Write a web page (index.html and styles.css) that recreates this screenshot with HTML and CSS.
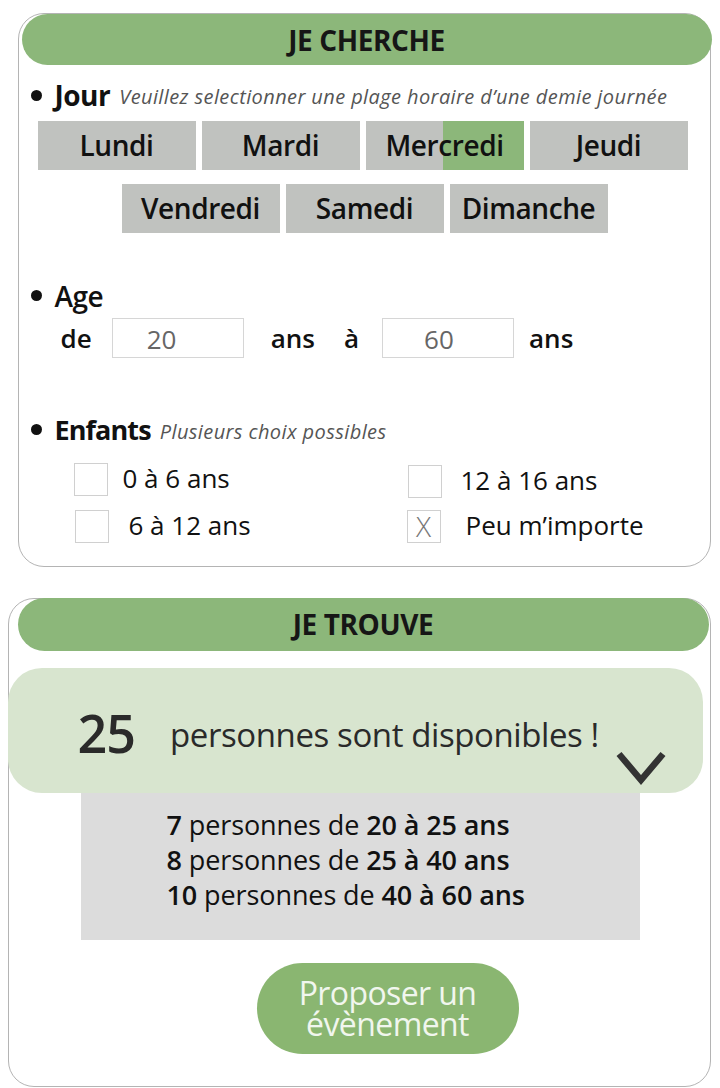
FILE: index.html
```html
<!DOCTYPE html>
<html lang="fr">
<head>
<meta charset="utf-8">
<title>Je cherche / Je trouve</title>
<link rel="stylesheet" href="styles.css">
</head>
<body>
  <section class="card card-search">
    <div class="pill-header">JE CHERCHE</div>

    <div class="section-title st-jour">
      <span class="dot"></span><span class="label">Jour</span>
      <span class="hint">Veuillez selectionner une plage horaire d’une demie journée</span>
    </div>
    <div class="days">
      <div class="day">Lundi</div>
      <div class="day">Mardi</div>
      <div class="day day-half">Mercredi</div>
      <div class="day">Jeudi</div>
      <div class="day">Vendredi</div>
      <div class="day">Samedi</div>
      <div class="day">Dimanche</div>
    </div>

    <div class="section-title st-age">
      <span class="dot"></span><span class="label label-age">Age</span>
    </div>
    <div class="age-row">
      <span class="word">de</span>
      <div class="num-input in-from">20</div>
      <span class="word w-ans1">ans</span>
      <span class="word w-a">à</span>
      <div class="num-input in-to">60</div>
      <span class="word w-ans2">ans</span>
    </div>

    <div class="section-title st-enfants">
      <span class="dot"></span><span class="label label-enfants">Enfants</span>
      <span class="hint">Plusieurs choix possibles</span>
    </div>
    <div class="kids">
      <div class="kid"><span class="box"></span><span>0 à 6 ans</span></div>
      <div class="kid kid-r1"><span class="box"></span><span>12 à 16 ans</span></div>
      <div class="kid kid-l2"><span class="box"></span><span>6 à 12 ans</span></div>
      <div class="kid kid-r2"><span class="box box-checked">X</span><span>Peu m’importe</span></div>
    </div>
  </section>

  <section class="card card-result">
    <div class="pill-header">JE TROUVE</div>
    <div class="result">
      <span class="count">25</span>
      <span class="count-text">personnes sont disponibles !</span>
      <svg class="chevron" width="50" height="36" viewBox="0 0 50 36" aria-hidden="true">
        <path d="M3 4 L25 30 L47 4" fill="none" stroke="#333" stroke-width="6.5"/>
      </svg>
    </div>
    <div class="breakdown">
      <div><b>7</b> personnes de <b>20 à 25 ans</b></div>
      <div><b>8</b> personnes de <b>25 à 40 ans</b></div>
      <div><b>10</b> personnes de <b>40 à 60 ans</b></div>
    </div>
    <div class="btn">Proposer un<br>évènement</div>
  </section>
</body>
</html>
```

FILE: styles.css
```css
body {
  margin: 0;
  font-family: "Open Sans", "Noto Sans", sans-serif;
  color: #111;
  background: #fff;
}

.card {
  box-sizing: border-box;
  border: 1.5px solid #b4b4b4;
  border-radius: 26px;
  background: #fff;
  display: flex;
  flex-direction: column;
}

.card-search {
  margin: 13px 0 0 18px;
  width: 693px;
  height: 554px;
}

.card-result {
  margin: 31px 0 0 8px;
  width: 703px;
  height: 489px;
  position: relative;
}

.pill-header {
  background: #8cb77a;
  border-radius: 27px;
  display: flex;
  align-items: center;
  justify-content: center;
  font-weight: 700;
  font-size: 28px;
  letter-spacing: -0.4px;
  color: #161616;
}

.card-search .pill-header {
  height: 51px;
  margin: 0 -1.5px 0 2.5px;
}

.card-result .pill-header {
  height: 53px;
  margin: -1.5px 1.5px 0 8.5px;
}

/* section titles */
.section-title {
  display: flex;
  align-items: center;
  height: 30px;
  padding-left: 11.5px;
}

.dot {
  width: 11px;
  height: 11px;
  border-radius: 50%;
  background: #111;
  margin-right: 13px;
  flex: none;
}

.label {
  font-weight: 700;
  font-size: 28px;
  letter-spacing: -0.5px;
}

.label-age {
  font-weight: 600;
}

.label-enfants {
  font-size: 27px;
  letter-spacing: -0.9px;
}

.hint {
  font-style: italic;
  font-size: 20px;
  color: #555;
  margin-left: 9px;
  letter-spacing: 0.4px;
  padding-top: 3px;
}

.st-jour { margin-top: 15px; }
.st-age { margin-top: 48px; }
.st-enfants { margin-top: 57px; }

/* days */
.days {
  width: 650px;
  margin: 10.5px 0 0 18.5px;
  display: flex;
  flex-wrap: wrap;
  justify-content: center;
  gap: 14px 6px;
}

.day {
  width: 158px;
  height: 49px;
  background: #c0c2bf;
  display: flex;
  align-items: center;
  justify-content: center;
  font-size: 28px;
  font-weight: 600;
  letter-spacing: -0.4px;
  color: #111;
}

.day:nth-child(5) { margin-left: 4px; }

.day-half {
  background: linear-gradient(to right, #c0c2bf 49%, #8cb77a 49%);
}

/* age */
.age-row {
  margin-top: 7px;
  height: 40px;
  display: flex;
  align-items: center;
  padding-left: 41.5px;
  font-size: 26px;
  font-weight: 600;
}

.num-input {
  box-sizing: border-box;
  width: 132px;
  height: 40px;
  border: 1px solid #d6d6d6;
  font-weight: 400;
  color: #666;
  display: flex;
  align-items: center;
  padding-top: 2px;
}

.in-from { margin-left: 20px; padding-left: 34px; }
.in-to { margin-left: 23px; padding-left: 41px; }
.w-ans1 { margin-left: 27px; }
.w-a { margin-left: 29px; }
.w-ans2 { margin-left: 15px; }

/* kids */
.kids {
  margin-top: 16px;
  display: grid;
  grid-template-columns: 334px auto;
  row-gap: 12px;
  padding-left: 54.5px;
}

.kid {
  display: flex;
  align-items: center;
  gap: 15px;
  font-size: 26px;
  color: #111;
}

.kid > span:last-child {
  margin-top: -3px;
}

.kid-r1 { margin-top: 4px; gap: 19px; }
.kid-l2 { margin-left: 1px; gap: 20px; }
.kid-r2 { margin-left: -1px; gap: 25px; }

.box {
  box-sizing: border-box;
  width: 34px;
  height: 33px;
  border: 1px solid #d0d0d0;
  flex: none;
}

.kid .box-checked {
  display: flex;
  align-items: center;
  justify-content: center;
  font-size: 28px;
  font-weight: 300;
  color: #777;
  margin-top: 0;
}

/* result */
.result {
  position: relative;
  margin: 17px 7.5px 0 -1.5px;
  height: 125px;
  background: #d8e5cf;
  border-radius: 34px;
  display: flex;
  align-items: center;
  padding: 4px 0 0 70px;
  box-sizing: border-box;
  color: #2a2a2a;
}

.count {
  font-size: 52px;
  font-weight: 600;
  letter-spacing: -1px;
}

.count-text {
  margin-left: 35px;
  font-size: 33px;
  letter-spacing: -0.4px;
  padding-top: 4px;
}

.chevron {
  position: absolute;
  left: 608px;
  top: 82px;
}

.breakdown {
  box-sizing: border-box;
  margin-left: 71.5px;
  width: 559px;
  height: 147px;
  background: #dcdcdc;
  padding: 14px 0 0 86px;
  font-size: 27px;
  line-height: 35px;
  letter-spacing: -0.1px;
  color: #111;
}

.breakdown b {
  font-weight: 600;
}

.btn {
  margin: 23px 0 0 247.5px;
  width: 262px;
  height: 91px;
  border-radius: 46px;
  background: #8ab671;
  color: #f1f6ee;
  font-size: 32px;
  line-height: 31px;
  text-align: center;
  display: flex;
  align-items: center;
  justify-content: center;
  letter-spacing: -0.6px;
}
```
